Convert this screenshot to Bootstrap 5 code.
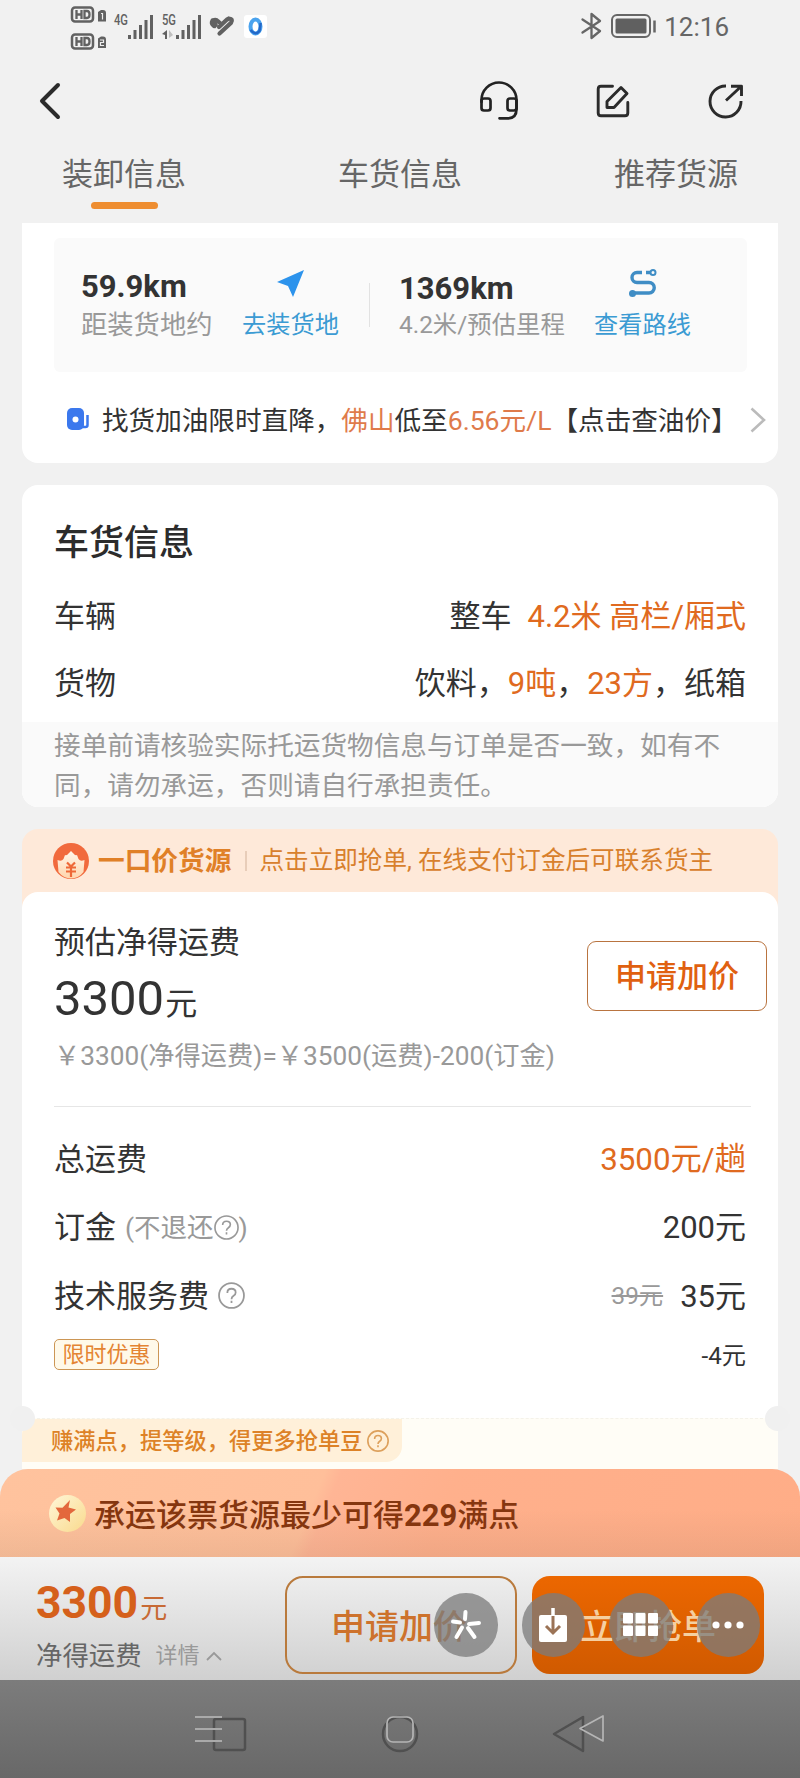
<!DOCTYPE html>
<html lang="zh-CN">
<head>
<meta charset="utf-8">
<meta name="viewport" content="width=device-width, initial-scale=1">
<title>货源详情</title>
<link href="https://cdn.jsdelivr.net/npm/bootstrap@5.3.0/dist/css/bootstrap.min.css" rel="stylesheet">
<style>
body{width:800px;height:1778px;overflow:hidden;background:#f1f1f1;color:#333;font-family:Roboto,"Noto Sans CJK SC",sans-serif;font-size:31px;line-height:1;white-space:nowrap}
svg{display:block;flex:none;overflow:visible}
.status{height:48px;padding:0 71px}
.clock{font-size:26px;color:#666}
.tool{height:104px;padding:2px 57px 0 39px}
.tabs{height:71px;padding:7px 62px 0;color:#666}
.tabs a{color:#666;text-decoration:none;height:51px;line-height:32px}
.tabs .on::after{content:"";display:block;width:67px;height:7px;border-radius:4px;background:#ee8d30;margin:11px 0 0 29px}
.panel{background:#fff;margin:0 22px;width:756px}
.p1{height:240px;border-radius:0 0 16px 16px;padding:15px 0 0 32px}
.dist{width:693px;height:134px;background:#fafafa;border-radius:6px;padding-left:27px}
.km{font-weight:700;font-size:31px;line-height:34px}
.sub{color:#999}
.blue{color:#3b9bd3;font-size:24.2px;line-height:28px}
.org{color:#e06a20}
.fuel{height:98px;font-size:26.6px;padding-right:12px}
.fuel .org{color:#df7b4b}
.p2{height:322px;margin-top:22px;border-radius:16px;padding-top:38px}
.ttl{font-size:35px;font-weight:500;height:42px;line-height:42px;padding-left:32px;color:#2c2c2c}
.line{padding:0 32px;height:67px}
.note{background:#fafafa;color:#999;font-size:26.65px;line-height:40px;height:85px;padding:4px 32px;border-radius:0 0 16px 16px}
.offer{background:#fee9d9;margin:22px 22px 0;border-radius:16px 16px 0 0}
.offerhead{height:63px;padding-left:31px;color:#d8802c;font-size:24.6px}
.offerhead b{font-weight:700;font-size:26.7px;margin-left:9px;color:#e08027}
.offerhead b,.offerhead span{padding-top:2px}
.offerhead i{width:2px;height:20px;background:#e8cdb9;margin:0 12px 0 14px}
.p3{height:526px;border-radius:16px 16px 0 0;padding:35px 32px 0;margin:0}
.raise{width:180px;height:70px;border:1.5px solid #b97440;border-radius:9px;color:#e06010;font-size:31px;font-weight:500;background:#fff;padding:3px 0 0;margin-right:-21px}
.net{font-size:49px;line-height:52px}
.net small{font-size:32px}
.formula{font-size:26.25px;color:#999;line-height:30px}
.rule{height:1px;background:#e6e6e6;width:697px}
.r2{height:68.5px}
.sm{font-size:26.5px;color:#999}
.tag{width:105px;height:31px;border:1.5px solid #cc9655;border-radius:5px;background:#fff9e9;color:#e48433;font-size:22px}
.extra{height:51px;background:#fffdf6;margin:0 22px;position:relative;border-top:1px dashed #f4f2ea}
.extra::before,.extra::after{content:"";position:absolute;top:-13px;width:25px;height:25px;border-radius:50%;background:#f0f0f0}
.extra::before{left:-12px}.extra::after{right:-12px}
.pill{width:380px;height:43px;background:#fff0d9;color:#dd8227;border-radius:16px 0 16px 0;font-size:22.25px;font-weight:500;padding:2px 0 0 29px;gap:4px}
.dock{height:88px;border-radius:28px 28px 0 0;color:#85360f;font-weight:500;font-size:31px;padding:3px 0 0 49px;gap:8px;background:linear-gradient(180deg,rgba(0,0,0,0) 45%,rgba(90,70,50,.09)),linear-gradient(112deg,#ffc39e 0,#ffbf9a 39%,#ffb595 41%,#ffb08c 55%,#ffad87)}
.dock b{font-weight:700}
.dock span{padding-top:2px}
.bar{height:123px;background:linear-gradient(#f3f3f3,#d0d0d0);padding:0 36px;position:relative}
.price{font-size:44.5px;font-weight:700;color:#d5601b;line-height:50px}
.price small{font-size:27px;font-weight:400;margin-left:2px;color:#c76a35}
.act{width:232px;height:98px;border-radius:18px;font-size:34px;font-weight:500;padding:3px 0 0;line-height:1}
.a1{border:2.5px solid #b97a3c;color:#cd722c;background:transparent;padding-right:4px}
.a2{border:0;background:linear-gradient(#ec6700,#d05a00);color:#f5cfa0}
.float-tools{position:absolute;left:434px;top:36px;gap:24px}
.float-tools span{width:63.5px;height:63.5px;border-radius:50%;background:rgba(123,123,123,.76);display:flex;align-items:center;justify-content:center}
.sysnav{height:98px;background:linear-gradient(#7c7c7c,#686868);padding:13px 195px 6px}
</style>
</head>
<body>
<div class="status d-flex align-items-center">
  <svg width="210" height="48" viewBox="0 0 210 48" fill="#616161">
    <g id="hd"><rect x="1" y="7.500" width="21" height="14" rx="3" fill="none" stroke="#616161" stroke-width="2.500"/><path d="M5.500 10v9M10.500 10v9M5 14.500h5.500M13.500 11v7h2.500q2.500 0 2.500-3.500t-2.500-3.500z" fill="none" stroke="#616161" stroke-width="2.300"/></g>
    <use href="#hd" y="27"/>
    <path d="M27 12l3-2h2q3 0 3 3v8.500h-8zM27 38.500l3-2h2q3 0 3 3v8.500h-8z"/>
    <path d="M30 13.500h1.500v6M29 40h3.500v2.500h-3v3h3.500" fill="none" stroke="#eee" stroke-width="1.200"/>
    <text x="43" y="25" font-size="15" font-weight="500" textLength="14" lengthAdjust="spacingAndGlyphs">4G</text>
    <text x="91" y="25" font-size="15" font-weight="500" textLength="14" lengthAdjust="spacingAndGlyphs">5G</text>
    <path id="sig" d="M57 35h3v4h-3zM62.500 30h3v9h-3zM68 25h3v14h-3zM73.500 20h3v19h-3zM79 15h3v24h-3z"/>
    <use href="#sig" x="48"/>
    <path d="M91 34l5-4v9h-2v-4z"/><path d="M98 30l4 5-4 3z" opacity=".35"/>
    <path d="M148.500 33.500L160 22.800q2.500-4-2-4.300l-2 1-8 7.500M142 20.500q3-1.500 5 .8l2.500 2.200M141.500 20.500q-1.500 2.500.5 4.500l1 1" fill="none" stroke="#616161" stroke-width="4.200" stroke-linecap="round"/>
    <path d="M140 21l5-1.500 2 6-3 3-4-4z"/>
    <rect x="173" y="15" width="23" height="23" rx="3" fill="#fff"/>
    <ellipse cx="184.500" cy="26.500" rx="5" ry="7" fill="none" stroke="#4aa3ee" stroke-width="4"/>
    <path d="M179.500 30q5 6 9 1l1.200-8" fill="none" stroke="#2368c8" stroke-width="2.500"/>
  </svg>
  <svg class="ms-auto" style="margin-top:4px" width="77" height="28" viewBox="0 0 77 28" fill="none" stroke="#666" stroke-width="2.300"><path d="M1.500 7.500L19 19l-8.500 7V2L19 9 1.500 20.500" stroke-linejoin="round" stroke-linecap="round"/><rect x="31" y="3" width="38" height="22" rx="5" stroke-width="2"/><rect x="34.500" y="6.500" width="31" height="15" rx="1.500" fill="#606060" stroke="none"/><path d="M73.500 8.500v12" stroke-width="2.500"/></svg>
  <span class="clock" style="margin:6px 0 0 6px">12:16</span>
</div>
<div class="tool d-flex align-items-center">
  <svg width="22" height="36" viewBox="0 0 22 36" fill="none" stroke="#2b2b2b" stroke-width="4" stroke-linecap="round" stroke-linejoin="round"><path d="M19 2L3 18l16 16"/></svg>
  <svg style="margin-left:419px" width="38" height="38" viewBox="0 0 38 38" fill="none" stroke="#222" stroke-width="2.700" stroke-linecap="round" stroke-linejoin="round"><path d="M1.500 20v-2a17.500 17.500 0 0 1 35 0v9q0 9-8 9.300h-9"/><rect x="1.500" y="16.500" width="9" height="12" rx="2.500"/><rect x="27.500" y="16.500" width="9" height="12" rx="2.500"/></svg>
  <svg style="margin-left:78px" width="34" height="34" viewBox="0 0 34 34" fill="none" stroke="#2b2b2b" stroke-width="2.900" stroke-linejoin="round" stroke-linecap="round"><path d="M16.500 2.200H5Q2.200 2.200 2.200 5v24q0 2.800 2.800 2.800h24q2.800 0 2.800-2.800V18.500M25 3.500l6 6L18 23.500h-7v-6z"/></svg>
  <svg class="ms-auto" width="35" height="34" viewBox="0 0 35 34" fill="none" stroke="#2b2b2b" stroke-width="2.900" stroke-linejoin="round"><path d="M18 2a15.500 15.500 0 1 0 15 15M18 16.500L32.500 3M23 2.200h10.500V12"/></svg>
</div>
<div class="tabs d-flex justify-content-between"><a class="on">装卸信息</a><a>车货信息</a><a>推荐货源</a></div>

<section class="panel p1">
  <div class="dist d-flex">
    <div style="width:161px;padding-top:32px"><div class="km">59.9km</div><div class="sub" style="font-size:26.3px;line-height:42px">距装货地约</div></div>
    <div class="d-flex flex-column align-items-center" style="padding-top:32px;width:97px">
      <svg width="27" height="27" viewBox="0 0 27 27" fill="#2c93ec"><path d="M27 0L0 12l11 4 5 11z"/></svg><div class="blue" style="margin-top:14px">去装货地</div></div>
    <div style="width:1px;height:44px;background:#e2e2e2;margin:45px 29px 0 30px"></div>
    <div style="width:195px;padding-top:34px"><div class="km">1369km</div><div class="sub" style="font-size:24.4px;line-height:38px">4.2米/预估里程</div></div>
    <div class="d-flex flex-column align-items-center" style="padding-top:31px;width:97px">
      <svg width="28" height="28" viewBox="0 0 28 28" fill="none" stroke="#3f8dc5" stroke-width="3.400"><path d="M13 3.500H8a5 5 0 0 0 0 10h12a5 5 0 0 1 0 10.500H4M17 3.500h4"/><circle cx="24" cy="3.500" r="2.500" stroke-width="2"/><circle cx="3.500" cy="24.500" r="3.500" fill="#3f8dc5" stroke="none"/></svg><div class="blue" style="margin-top:14px">查看路线</div></div>
  </div>
  <div class="fuel d-flex align-items-center">
    <svg style="margin:-4px 13px 0 13px" width="22" height="24" viewBox="0 0 22 24"><rect y="1" width="17" height="22" rx="5" fill="#3b78ed"/><path d="M16 20h2.500q2 0 2-2V8" fill="none" stroke="#3b78ed" stroke-width="2.500"/><circle cx="8.500" cy="12.500" r="3" fill="#fff"/></svg>
    <span style="padding-top:1px">找货加油限时直降，<span class="org">佛山</span>低至<span class="org">6.56元/L</span>【点击查油价】</span>
    <svg class="ms-auto" style="margin-top:-3px" width="16" height="26" viewBox="0 0 16 26" fill="none" stroke="#bbb" stroke-width="2.600"><path d="M1.500 1.500L14 13 1.500 24.500"/></svg>
  </div>
</section>

<section class="panel p2">
  <div class="ttl">车货信息</div>
  <div class="line d-flex align-items-center justify-content-between" style="margin-top:18px"><span>车辆</span><span>整车<span class="org" style="margin-left:16px">4.2米 高栏/厢式</span></span></div>
  <div class="line d-flex align-items-center justify-content-between"><span>货物</span><span>饮料，<span class="org">9吨</span>，<span class="org">23方</span>，纸箱</span></div>
  <div class="note" style="margin-top:5px">接单前请核验实际托运货物信息与订单是否一致，如有不<br>同，请勿承运，否则请自行承担责任。</div>
</section>

<section class="offer">
  <div class="offerhead d-flex align-items-center">
    <svg width="36" height="36" viewBox="0 0 36 36"><defs><linearGradient id="face" x2="0" y2="1"><stop stop-color="#fff6ea"/><stop offset="1" stop-color="#ffd5ad"/></linearGradient></defs><circle cx="18" cy="18" r="18" fill="#f16a3d"/><path d="M4.500 17q4 2 6-1l1.500-4q2 1 3.500-1.500l2.500-2.500 2.500 2.500q1.500 2.500 3.500 1.500l1.500 4q2 3 6 1l-1 12q-5 6.500-12.500 6.500T5.500 29z" fill="url(#face)"/><path d="M14 19.500l4 4 4-4M13 24.500h10M13 28.500h10M18 23.500V34" fill="none" stroke="#ee6837" stroke-width="2.200"/></svg>
    <b>一口价货源</b><i></i><span>点击立即抢单, 在线支付订金后可联系货主</span>
  </div>
  <div class="panel p3">
    <div class="d-flex justify-content-between">
      <div><div style="line-height:32px">预估净得运费</div><div class="net" style="margin-top:14px">3300<small style="margin-left:1px">元</small></div></div>
      <button class="btn raise" style="margin-top:14px">申请加价</button>
    </div>
    <div class="formula" style="margin-top:11px">￥3300(净得运费)=￥3500(运费)-200(订金)</div>
    <div class="rule" style="margin-top:35px"></div>
    <div class="r2 d-flex align-items-center justify-content-between" style="margin-top:18px"><span>总运费</span><span class="org" style="font-size:31.300px">3500元/趟</span></div>
    <div class="r2 d-flex align-items-center"><span>订金</span><span class="sm d-flex align-items-center" style="margin-left:9px">(不退还<svg width="25" height="25" viewBox="0 0 26 26" fill="none" stroke="#999" stroke-width="1.700"><circle cx="13" cy="13" r="12"/><path d="M9 10.500q0-4 4-4t4 3.500q0 2-2 3.300t-2 3.200M13 18v2.300"/></svg>)</span><span class="ms-auto">200元</span></div>
    <div class="r2 d-flex align-items-center"><span>技术服务费</span><svg style="margin:-2px 0 0 9px" width="27" height="27" viewBox="0 0 26 26" fill="none" stroke="#999" stroke-width="1.700"><circle cx="13" cy="13" r="12"/><path d="M9 10.500q0-4 4-4t4 3.500q0 2-2 3.300t-2 3.200M13 18v2.300"/></svg><s class="ms-auto" style="font-size:24.300px;color:#999;margin-right:17px">39元</s><span>35元</span></div>
    <div class="d-flex align-items-center justify-content-between" style="height:48px"><span class="tag d-flex align-items-center justify-content-center">限时优惠</span><span style="font-size:24.200px;padding-top:3px">-4元</span></div>
  </div>
</section>
<div class="extra">
  <div class="pill d-flex align-items-center">赚满点，提等级，得更多抢单豆<svg style="margin-top:-2px" width="22" height="22" viewBox="0 0 26 26" fill="none" stroke="#dda05c" stroke-width="1.900"><circle cx="13" cy="13" r="12"/><path d="M9 10.500q0-4 4-4t4 3.500q0 2-2 3.300t-2 3.200M13 18v2.300"/></svg></div>
</div>

<div class="dock d-flex align-items-center">
  <svg style="margin-top:-2px" width="37" height="37" viewBox="0 0 37 37"><defs><linearGradient id="coin" x2="1" y2="1"><stop offset="0" stop-color="#fff6d8"/><stop offset="1" stop-color="#f9da8d"/></linearGradient></defs><circle cx="18.500" cy="18.500" r="18.500" fill="url(#coin)"/><path d="M20 5l-1.500 7.500 7.500 2-6 4.500 0 8-5.500-4-7.500 2.500 2.500-7-4-6 7 .2z" fill="#e3673c" transform="translate(1)"/></svg>
  <span>承运该票货源最少可得<b>229</b>满点</span>
</div>
<div class="bar d-flex">
  <div style="width:249px;padding-top:21px">
    <div class="price">3300<small>元</small></div>
    <div class="d-flex align-items-center" style="margin-top:7px;line-height:30px;font-size:26.400px;color:#666">净得运费<span style="font-size:22px;color:#999;margin-left:14px">详情</span><svg style="margin-left:6px" width="16" height="10" viewBox="0 0 16 10" fill="none" stroke="#999" stroke-width="1.800"><path d="M1 9l7-7 7 7"/></svg></div>
  </div>
  <div class="d-flex" style="gap:15px;padding-top:19px">
    <button class="btn act a1">申请加价</button><button class="btn act a2">立即抢单</button>
  </div>
  <div class="float-tools d-flex">
    <span><svg width="32" height="32" viewBox="0 0 32 32" stroke="#fff" stroke-width="4" stroke-linecap="round"><path d="M15 10l.500-7M10 13.500l-7-1M19 15l10-1M12 18.500L6.500 28M18 19l6.500 9"/></svg></span>
    <span><svg width="28" height="34" viewBox="0 0 28 34"><path d="M2 7h24q2 0 2 2v23q0 2-2 2H2q-2 0-2-2V9q0-2 2-2z" fill="#fff"/><path d="M14 0v9" stroke="#fff" stroke-width="3.500"/><path d="M14 8v17M7 18l7 7 7-7" fill="none" stroke="#9b7356" stroke-width="3"/></svg></span>
    <span><svg width="35" height="23" viewBox="0 0 35 23" fill="#fff"><rect width="10" height="10.500" rx="1"/><rect x="12.500" width="10" height="10.500" rx="1"/><rect x="25" width="10" height="10.500" rx="1"/><rect y="12.500" width="10" height="10.500" rx="1"/><rect x="12.500" y="12.500" width="10" height="10.500" rx="1"/><rect x="25" y="12.500" width="10" height="10.500" rx="1"/></svg></span>
    <span><svg width="32" height="8" viewBox="0 0 32 8" fill="#fff"><circle cx="4" cy="4" r="3.600"/><circle cx="16" cy="4" r="3.600"/><circle cx="28" cy="4" r="3.600"/></svg></span>
  </div>
</div>
<div class="sysnav d-flex justify-content-between align-items-center">
  <svg width="51" height="38" viewBox="0 0 51 38" fill="none"><rect x="19" y="5" width="31" height="31" rx="2" stroke="#505050" stroke-width="2.500"/><path d="M0 3h27M0 15h27M0 27h27" stroke="#aaa" stroke-width="1.800"/></svg>
  <svg width="36" height="38" viewBox="0 0 36 38" fill="none"><circle cx="18" cy="20" r="17" stroke="#505050" stroke-width="2.500"/><rect x="5" y="3" width="26" height="25" rx="6" stroke="#b5b5b5" stroke-width="1.700"/></svg>
  <svg width="52" height="38" viewBox="0 0 52 38" fill="none" stroke-linejoin="round"><path d="M30 3v34L1 20z" stroke="#505050" stroke-width="2.500"/><path d="M50 2v25L27 14.500z" stroke="#b5b5b5" stroke-width="1.700"/></svg>
</div>
<script src="https://cdn.jsdelivr.net/npm/bootstrap@5.3.0/dist/js/bootstrap.bundle.min.js"></script>
</body>
</html>
